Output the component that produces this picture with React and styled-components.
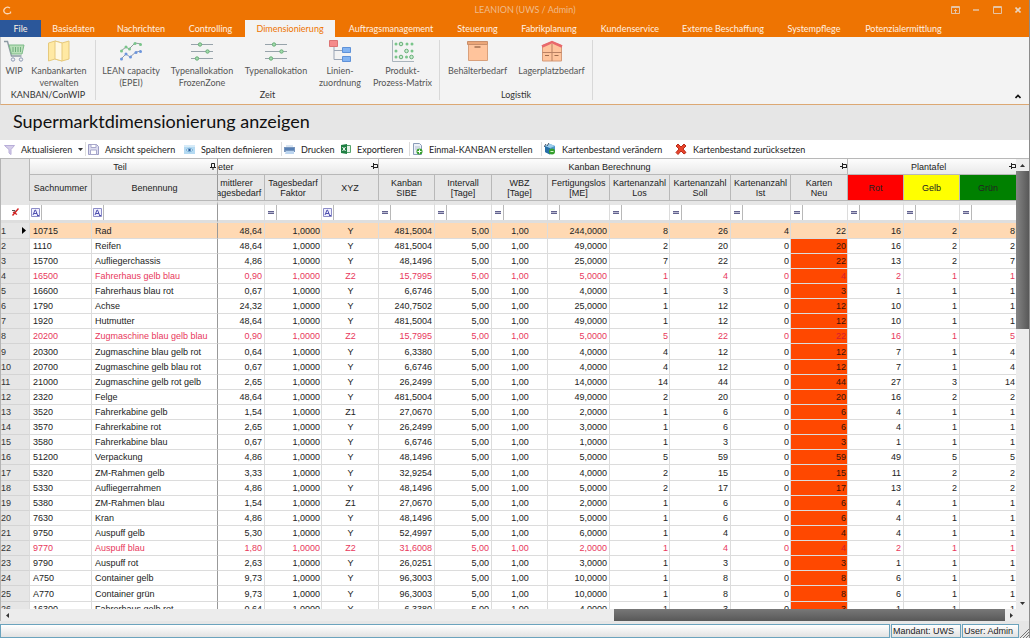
import React, { useState } from 'react';
import styled, { createGlobalStyle, css } from 'styled-components';

const GlobalStyle = createGlobalStyle`
	* {
		box-sizing: border-box;
	}

	body {
		margin: 0;
		font-family: Lato, "Open Sans", sans-serif;
		font-size: 9px;
		color: #222;
		overflow: hidden;
	}

	button, input {
		font: inherit;
		color: inherit;
		margin: 0;
		padding: 0;
		border: 0;
		background: none;
	}
`;

const Window = styled.div`
	display: flex;
	flex-direction: column;
	height: 100vh;
	background-color: #e6e6e6;
	border-right: 1px solid #8c8c8c;
`;

const TitleBar = styled.header`
	display: grid;
	grid-template-columns: 1fr auto 1fr;
	align-items: center;
	flex: none;
	height: 20px;
	padding: 0 5px 0 3px;
	background-color: #ee7402;
	color: #eebb8c;
`;

const AppName = styled.span`
	font-size: 9px;
	line-height: 12px;
	padding-left: 70px;
	margin-right: 47px;
`;

const WindowButtons = styled.div`
	display: flex;
	justify-content: flex-end;
	gap: 9px;
`;

const WindowButton = styled.button`
	display: flex;
	align-items: center;
	justify-content: center;
	width: 12px;
	height: 12px;
`;

const Tabs = styled.nav`
	display: flex;
	flex: none;
	height: 17px;
	background-color: #ee7402;
`;

const Tab = styled.button`
	flex: none;
	width: ${({ $width }) => $width}px;
	height: 17px;
	line-height: 16px;
	color: #fff1e2;
	white-space: nowrap;
	cursor: pointer;

	${({ $file }) => $file && css`
		background-color: #2b579a;
	`}

	${({ $active }) => $active && css`
		background-color: #f3f3f3;
		color: #ee7402;
	`}
`;

const Ribbon = styled.section`
	display: flex;
	flex: none;
	height: 68px;
	padding: 3px 0 4px;
	background-color: #f3f3f3;
	border-bottom: 1px solid #dca873;
	border-left: 1px solid #c6c6c6;
`;

const RibbonGroup = styled.div`
	display: flex;
	flex-direction: column;
	justify-content: space-between;
	padding: 0 2px;
	border-right: 1px solid #d8d8d8;
`;

const RibbonItems = styled.div`
	display: flex;
`;

const RibbonButton = styled.button`
	display: flex;
	flex-direction: column;
	align-items: center;
	width: ${({ $width }) => $width}px;
	line-height: 12px;
	color: #555;
	white-space: pre;
	cursor: pointer;

	svg {
		margin-bottom: 3px;
	}
`;

const GroupName = styled.span`
	line-height: 10px;
	text-align: center;
	color: #333;
`;

const CollapseButton = styled.button`
	align-self: flex-end;
	width: 12px;
	height: 10px;
	margin: 0 5px 0 auto;
`;

const Title = styled.h1`
	flex: none;
	height: 35px;
	margin: 0;
	padding-left: 13px;
	font-size: 18px;
	font-weight: normal;
	line-height: 33px;
	color: #111;
`;

const Toolbar = styled.div`
	display: flex;
	align-items: center;
	flex: none;
	height: 18px;
	padding-left: 2px;
	background-color: #fff;
`;

const ToolButton = styled.button`
	display: flex;
	align-items: center;
	flex: none;
	gap: 6px;
	width: ${({ $width }) => $width}px;
	height: 14px;
	padding-left: 2px;
	white-space: nowrap;
	cursor: pointer;
	border-right: 1px solid ${({ $divided }) => ($divided ? '#dcdcdc' : 'transparent')};

	svg {
		flex: none;
	}
`;

const GridPanel = styled.main`
	display: grid;
	grid-template-columns: 1fr 13px;
	grid-template-rows: 1fr 12px;
	flex: 1;
	min-height: 0;
	border-left: 1px solid #b4b4b4;
`;

const TableArea = styled.div`
	min-width: 0;
	min-height: 0;
	overflow: hidden;
	background-color: #fff;
`;

const Table = styled.table`
	width: 100%;
	table-layout: fixed;
	border-collapse: separate;
	border-spacing: 0;
	font-family: "Liberation Sans", Arial, sans-serif;
	font-size: 9px;
	line-height: 10px;
`;

const HeadCell = styled.th`
	height: ${({ $band }) => ($band ? 17 : 26)}px;
	padding: 0;
	overflow: hidden;
	font-weight: normal;
	white-space: pre;
	border-right: 1px solid ${({ $frozen }) => ($frozen ? '#999' : '#b8b8b8')};
	border-bottom: 1px solid #b8b8b8;
	background: ${({ $color, $band }) => $color || ($band ? 'linear-gradient(#fdfdfd, #e9e9e9)' : '#e6e6e6')};
	${({ $band }) => $band && 'border-top: 1px solid #b8b8b8;'}
`;

const BandLabel = styled.div`
	display: flex;
	align-items: center;

	span {
		flex: 1;
		text-align: ${({ $cut }) => ($cut ? 'left' : 'center')};
	}
`;

const CutLabel = styled.div`
	margin: 0 -1px 0 -10px;
`;

const Corner = styled.th`
	padding: 0;
	border-top: 1px solid #b8b8b8;
	border-right: 1px solid #b8b8b8;
	background-color: #e6e6e6;
`;

const FilterCell = styled.td`
	height: 22px;
	padding: 0;
	border-top: 4px solid #e6e6e6;
	border-bottom: 3px solid #dedede;
	border-right: 1px solid ${({ $frozen }) => ($frozen ? '#999' : '#dcdcdc')};
`;

const Filter = styled.div`
	display: flex;
	align-items: center;
	justify-content: center;
	height: 15px;

	input {
		flex: 1;
		width: 0;
		height: 15px;
		outline: 0;
	}
`;

const Operator = styled.button`
	display: flex;
	align-items: center;
	justify-content: center;
	flex: none;
	width: 12px;
	height: 15px;
	border-right: 1px solid #b8b8b8;
`;

const Row = styled.tr`
	height: 15px;
	color: ${({ $warning }) => ($warning ? '#e8385c' : '#222')};
	background-color: ${({ $selected }) => ($selected ? '#ffd9b3' : '#fff')};
	cursor: default;

	&:nth-child(8n + 1) {
		height: 16px;
	}
`;

const Cell = styled.td`
	padding: 0 ${({ $tight }) => ($tight ? 1 : 2)}px 0 3px;
	overflow: hidden;
	white-space: nowrap;
	text-align: ${({ $align }) => $align || 'right'};
	border-right: 1px solid ${({ $frozen }) => ($frozen ? '#999' : '#dcdcdc')};
	border-bottom: 1px solid #dcdcdc;

	${({ $changed, $warning }) => $changed && css`
		color: ${$warning ? '#d41c30' : '#3a1408'};
		background-color: #ff4800;
	`}
`;

const RowNumber = styled.th`
	padding: 0 3px 0 0;
	font-weight: normal;
	text-align: left;
	color: #333;
	border-right: 1px solid #dcdcdc;
	border-bottom: 1px solid #d4d4d4;
	background-color: #e6e6e6;

	div {
		display: flex;
		align-items: center;
		justify-content: space-between;
	}
`;

const VerticalBar = styled.div`
	display: flex;
	flex-direction: column;
	background-color: #ececec;
	border-top: 1px solid #b8b8b8;
`;

const HorizontalBar = styled.div`
	display: flex;
	grid-column: 1 / 3;
	padding-right: 12px;
	background-color: #ececec;
`;

const ArrowButton = styled.button`
	display: flex;
	align-items: center;
	justify-content: center;
	flex: none;
	width: 12px;
	height: 12px;
`;

const Track = styled.div`
	display: flex;
	flex: 1;
	flex-direction: ${({ $vertical }) => ($vertical ? 'column' : 'row')};
	justify-content: ${({ $vertical }) => ($vertical ? 'flex-start' : 'flex-end')};
`;

const Thumb = styled.div`
	${({ $vertical }) => ($vertical ? css`
		height: 37%;
		background: linear-gradient(to right, #858585, #585858);
	` : css`
		width: 391px;
		background: linear-gradient(#787878, #585858);
	`)}
`;

const StatusBar = styled.footer`
	display: flex;
	align-items: center;
	flex: none;
	gap: 1px;
	height: 17px;
	padding-top: 2px;
	background-color: #e6e6e6;
	font-family: "Liberation Sans", Arial, sans-serif;
`;

const StatusField = styled.div`
	flex: ${({ $fill }) => ($fill ? 1 : 'none')};
	height: 14px;
	width: ${({ $width }) => ($width ? `${$width}px` : 'auto')};
	padding-left: 1px;
	border: 1px solid #6ba3bd;
	line-height: 13px;
	font-size: 9px;
	white-space: nowrap;
	background: linear-gradient(#fff, #e2e2e2);
`;

const Grip = styled.svg`
	align-self: flex-end;
	flex: none;
`;

const icons = {
	cart: (
		<svg width="22" height="22" viewBox="0 0 22 22" fill="none">
			<path d="M1 1.500h3.500l4 14.500h10" stroke="#8d9aa3" strokeWidth="1.400" />
			<path d="M6 5h15l-2 9H8.500z" fill="#b9dfb9" stroke="#7dbb88" />
			<path d="M10 7v5M12.500 7v5M15 7v5M17.500 7v5" stroke="#6eae7c" />
			<circle cx="10" cy="19.500" r="1.700" stroke="#8d9ab5" />
			<circle cx="18" cy="19.500" r="1.700" stroke="#8d9ab5" />
		</svg>
	),
	map: (
		<svg width="22" height="22" viewBox="0 0 22 22">
			<path d="M.5 3 7 1l7 2 7-2v18l-7 2-7-2-6.500 2z" fill="#ffe9a3" stroke="#e6c97c" />
			<path d="M7 1l7 2v18l-7-2z" fill="#fff8e2" stroke="#e6c97c" />
		</svg>
	),
	capacity: (
		<svg width="22" height="22" viewBox="0 0 22 22" fill="none">
			<path d="M1 11l5-4 3 2 6-6 6 1" stroke="#8d9a9a" />
			<path d="M1 19l5-5 4 3 6-5 5-1" stroke="#8d9ab5" />
			<g fill="#79c58a"><circle cx="1.500" cy="11" r="1.500" /><circle cx="6" cy="7" r="1.500" /><circle cx="9.500" cy="9" r="1.500" /><circle cx="15" cy="3.500" r="1.500" /><circle cx="20.500" cy="4.500" r="1.500" /></g>
			<g fill="#6b95dc"><circle cx="1.500" cy="19" r="1.500" /><circle cx="6" cy="14" r="1.500" /><circle cx="10.500" cy="17" r="1.500" /><circle cx="16" cy="12.500" r="1.500" /><circle cx="20.500" cy="11.500" r="1.500" /></g>
		</svg>
	),
	sliders: (
		<svg width="22" height="22" viewBox="0 0 22 22" stroke="#97a3aa">
			<path d="M0 4.500h22M0 11.500h22M0 18.500h22" />
			<g fill="#a4dcae" stroke="#68ae77"><circle cx="9" cy="4.500" r="1.700" /><circle cx="16.500" cy="11.500" r="1.700" /><circle cx="6" cy="18.500" r="1.700" /></g>
		</svg>
	),
	tree: (
		<svg width="22" height="22" viewBox="0 0 22 22" fill="none">
			<path d="M5 7v12.500h8M5 10.500h8" stroke="#9aa5b5" />
			<path d="M.5.500h8v6h-8z" fill="#f58a8a" stroke="#dc7373" />
			<path d="M13.500 7.500h8v5h-8zM13.500 16.500h8v5h-8z" fill="#83b4f2" stroke="#5f92d8" />
		</svg>
	),
	matrix: (
		<svg width="22" height="22" viewBox="0 0 22 22" fill="#79c58a">
			<path d="M.5 0v21.500H22" stroke="#a9b4bc" fill="none" />
			<g><circle cx="4" cy="4" r="1.500" /><circle cx="15" cy="4" r="1.500" /><circle cx="20" cy="4" r="1.500" /><circle cx="4" cy="11" r="1.500" /><circle cx="20" cy="11" r="1.500" /><circle cx="4" cy="17" r="1.500" /><circle cx="14.500" cy="17" r="1.500" /></g>
			<g fill="#c9ecd0" stroke="#68ae77"><circle cx="9" cy="4" r="1.800" /><circle cx="14.500" cy="11" r="1.800" /><circle cx="9" cy="17" r="1.800" /><circle cx="19.500" cy="17" r="1.800" /></g>
		</svg>
	),
	box: (
		<svg width="22" height="22" viewBox="0 0 22 22">
			<path d="M1.500 4.500h19v16h-19z" fill="#ffc49c" stroke="#d9a07b" />
			<path d="M.5 1.500h20v3h-20z" fill="#eba678" stroke="#c98f6b" />
			<path d="M7.500 7h6" stroke="#8b5b3d" strokeWidth="1.200" />
		</svg>
	),
	warehouse: (
		<svg width="22" height="22" viewBox="0 0 22 22">
			<path d="M1.500 5.500 11 2l9.500 3.500v15.500h-19z" fill="#ffc49c" stroke="#d59a78" />
			<path d="M11 4v17M1.500 12.500h19" stroke="#b98163" />
			<path d="M4 15.500h4M13.500 15.500h4" stroke="#a06e50" />
			<path d="M1 6.500 11 2l10 4.500" fill="none" stroke="#e8696c" strokeWidth="2.500" />
		</svg>
	),
	funnel: (
		<svg width="11" height="11" viewBox="0 0 11 11">
			<path d="M.5 1.500h10L7 5.500v5l-2-1.500V5.500z" fill="#d5cdea" stroke="#b8aed8" />
		</svg>
	),
	save: (
		<svg width="11" height="11" viewBox="0 0 11 11">
			<path d="M.5.500h8l2 2v8H.500z" fill="#dcdcf0" stroke="#9d9dc5" />
			<path d="M3 .5h5v3H3zM2.500 6h6v4.500h-6z" fill="#fff" stroke="#a8a8cb" />
		</svg>
	),
	columns: (
		<svg width="11" height="11" viewBox="0 0 11 11">
			<path d="M0 1h11v9H0z" fill="#b5daf2" />
			<path d="M0 1h11v2H0z" fill="#d6ebf8" />
			<path d="M2 6q3.500-3.500 7 0-3.500 3.500-7 0" fill="#e8f6ff" stroke="#7cb3d8" />
			<circle cx="5.500" cy="6" r="1.300" fill="#245a9c" />
		</svg>
	),
	printer: (
		<svg width="11" height="11" viewBox="0 0 11 11">
			<path d="M2 1h7v3H2z" fill="#d9e5f2" />
			<path d="M0 3h11v5H0z" fill="#7896bd" />
			<path d="M1 4h9v2H1z" fill="#5780b5" />
			<path d="M2 7h8v3H1z" fill="#bcd5ef" />
		</svg>
	),
	excel: (
		<svg width="10" height="10" viewBox="0 0 10 10">
			<path d="M5 1.500h4.500v7H5z" fill="#e6f3e9" stroke="#57a56d" />
			<path d="M0 1l6-1v10L0 9z" fill="#1f7f43" />
			<path d="M1.500 3l3 4M4.500 3l-3 4" stroke="#fff" />
		</svg>
	),
	create: (
		<svg width="11" height="12" viewBox="0 0 11 12">
			<path d="M1.500.500h6l2 2v9h-8z" fill="#edf1f8" stroke="#8a9cb8" />
			<path d="M3 4h5M3 6h3" stroke="#b1bfd3" />
			<circle cx="7.500" cy="8.500" r="3" fill="#36a02c" />
			<path d="M5.500 8.500h4M7.500 6.500v4" stroke="#fff" />
		</svg>
	),
	change: (
		<svg width="12" height="12" viewBox="0 0 12 12">
			<path d="M1 3l5-2 5 2v6l-5 2.500L1 9z" fill="#4d96cc" />
			<path d="M1 3l5 2v6.500L1 9z" fill="#2870a8" />
			<path d="M1 3l5-2 5 2-5 2z" fill="#9dcdec" />
			<path d="M0 4l2-3M3 3l2-3" stroke="#3a4f66" />
			<circle cx="8" cy="8.500" r="3" fill="#36a02c" />
			<path d="M6.500 8.500h3" stroke="#d6f5cc" />
		</svg>
	),
	reset: (
		<svg width="12" height="12" viewBox="0 0 12 12">
			<path d="M3 1l3 3 3-3 2 2-3 3 3 3.500L9 11 6 8l-3 3.500-2-2L4 6 1 3z" fill="#e8452c" stroke="#b92c1a" />
		</svg>
	),
};

const Logo = () => (
	<svg width="9" height="9" viewBox="0 0 9 9" fill="none" stroke="#fbd7b5" strokeWidth="1.300">
		<path d="M7 2Q4 0 1.800 2.500T2 7q2.500 1.500 5.500 0V5.500" />
	</svg>
);

const Pin = ({ down }) => (
	<svg width="7" height="7" viewBox="0 0 7 7" fill="none" stroke="#222">
		{down
			? <path d="M1.500 4V.5h3V4M4.500.5v4M0 4.500h6M3 5v2" />
			: <path d="M3 1.500h3.500v3H3M3 4.500h4M2.500 0v6M0 3.500h2" />}
	</svg>
);

const Arrow = ({ dir }) => (
	<svg width="5" height="5" viewBox="0 0 5 5" fill="#333">
		{dir === 'up' && <path d="M0 4l2.500-3L5 4z" />}
		{dir === 'down' && <path d="M0 1l2.500 3L5 1z" />}
		{dir === 'left' && <path d="M4 0L1 2.500 4 5z" />}
		{dir === 'right' && <path d="M1 0l3 2.500L1 5z" />}
	</svg>
);

const RowMarker = () => (
	<svg width="4" height="7" viewBox="0 0 4 7" fill="#000">
		<path d="M0 0l4 3.500L0 7z" />
	</svg>
);

const TextOperator = () => (
	<svg width="9" height="9" viewBox="0 0 9 9" fill="none">
		<path d="M.5.500h8v8h-8z" fill="#f0f0ff" stroke="#8c8cc8" />
		<path d="M2 7l2-5h.5l2 5M3 5.500h3M6 7.500h2" stroke="#5050b0" />
	</svg>
);

const EqualOperator = () => (
	<svg width="6" height="4" viewBox="0 0 6 4">
		<path d="M0 .5h6M0 2.500h6" stroke="#62628e" />
		<path d="M0 1.500h6" stroke="#b9b9d0" />
	</svg>
);

const tabs = [
	{ name: 'File', width: 41 },
	{ name: 'Basisdaten', width: 65 },
	{ name: 'Nachrichten', width: 70 },
	{ name: 'Controlling', width: 69 },
	{ name: 'Dimensionierung', width: 90 },
	{ name: 'Auftragsmanagement', width: 112 },
	{ name: 'Steuerung', width: 61 },
	{ name: 'Fabrikplanung', width: 82 },
	{ name: 'Kundenservice', width: 80 },
	{ name: 'Externe Beschaffung', width: 106 },
	{ name: 'Systempflege', width: 76 },
	{ name: 'Potenzialermittlung', width: 103 },
];

const groups = [
	{
		name: 'KANBAN/ConWIP',
		items: [
			{ name: 'WIP', icon: 'cart', width: 22 },
			{ name: 'Kanbankarten\nverwalten', icon: 'map', width: 68 },
		],
	},
	{
		name: 'Zeit',
		items: [
			{ name: 'LEAN capacity\n(EPEI)', icon: 'capacity', width: 66 },
			{ name: 'Typenallokation\nFrozenZone', icon: 'sliders', width: 76 },
			{ name: 'Typenallokation', icon: 'sliders', width: 72 },
			{ name: 'Linien-\nzuordnung', icon: 'tree', width: 56 },
			{ name: 'Produkt-\nProzess-Matrix', icon: 'matrix', width: 69 },
		],
	},
	{
		name: 'Logistik',
		items: [
			{ name: 'Behälterbedarf', icon: 'box', width: 71 },
			{ name: 'Lagerplatzbedarf', icon: 'warehouse', width: 77 },
		],
	},
];

const tools = [
	{ name: 'Aktualisieren', icon: 'funnel', width: 84, divided: true, menu: true },
	{ name: 'Ansicht speichern', icon: 'save', width: 96 },
	{ name: 'Spalten definieren', icon: 'columns', width: 100, divided: true },
	{ name: 'Drucken', icon: 'printer', width: 57 },
	{ name: 'Exportieren', icon: 'excel', width: 71, divided: true },
	{ name: 'Einmal-KANBAN erstellen', icon: 'create', width: 132, divided: true },
	{ name: 'Kartenbestand verändern', icon: 'change', width: 131 },
	{ name: 'Kartenbestand zurücksetzen', icon: 'reset', width: 140 },
];

const columns = [
	{ key: 'number', name: 'Sachnummer', width: 62, align: 'left', filter: 'text' },
	{ key: 'title', name: 'Benennung', width: 126, align: 'left', filter: 'text', frozen: true },
	{ key: 'demand', name: 'mittlerer\nTagesbedarf', width: 47, cut: true },
	{ key: 'factor', name: 'Tagesbedarf\nFaktor', width: 57, filter: 'equal', tight: true },
	{ key: 'xyz', name: 'XYZ', width: 57, align: 'center', filter: 'text' },
	{ key: 'sibe', name: 'Kanban\nSIBE', width: 56, filter: 'equal' },
	{ key: 'interval', name: 'Intervall\n[Tage]', width: 57, filter: 'equal' },
	{ key: 'wbz', name: 'WBZ\n[Tage]', width: 56, align: 'center', filter: 'equal' },
	{ key: 'lot', name: 'Fertigungslos\n[ME]', width: 62, filter: 'equal' },
	{ key: 'cardsLot', name: 'Kartenanzahl\nLos', width: 60, filter: 'equal', tight: true },
	{ key: 'cardsTarget', name: 'Kartenanzahl\nSoll', width: 61, filter: 'equal' },
	{ key: 'cardsActual', name: 'Kartenanzahl\nIst', width: 60, filter: 'equal', tight: true },
	{ key: 'cardsNew', name: 'Karten\nNeu', width: 57, filter: 'equal', tight: true },
	{ key: 'red', name: 'Rot', width: 56, filter: 'equal', color: '#ff0000' },
	{ key: 'yellow', name: 'Gelb', width: 56, filter: 'equal', color: '#ffff00' },
	{ key: 'green', name: 'Grün', width: 57, filter: 'equal', color: '#008000', tight: true },
];

const bands = [
	{ name: 'Teil', span: 2, frozen: true },
	{ name: 'eter', span: 3, cut: true },
	{ name: 'Kanban Berechnung', span: 8 },
	{ name: 'Plantafel', span: 3 },
];

const parts = [
	['10715', 'Rad', '48,64', 'Y', '481,5004', '244,0000', 8, 26, 4, 22, 16, 2, 8],
	['1110', 'Reifen', '48,64', 'Y', '481,5004', '49,0000', 2, 20, 0, 20, 16, 2, 2],
	['15700', 'Aufliegerchassis', '4,86', 'Y', '48,1496', '25,0000', 7, 22, 0, 22, 13, 2, 7],
	['16500', 'Fahrerhaus gelb blau', '0,90', 'Z2', '15,7995', '5,0000', 1, 4, 0, 4, 2, 1, 1],
	['16600', 'Fahrerhaus blau rot', '0,67', 'Y', '6,6746', '4,0000', 1, 3, 0, 3, 1, 1, 1],
	['1790', 'Achse', '24,32', 'Y', '240,7502', '25,0000', 1, 12, 0, 12, 10, 1, 1],
	['1920', 'Hutmutter', '48,64', 'Y', '481,5004', '49,0000', 1, 12, 0, 12, 10, 1, 1],
	['20200', 'Zugmaschine blau gelb blau', '0,90', 'Z2', '15,7995', '5,0000', 5, 22, 0, 22, 16, 1, 5],
	['20300', 'Zugmaschine blau gelb rot', '0,64', 'Y', '6,3380', '4,0000', 4, 12, 0, 12, 7, 1, 4],
	['20700', 'Zugmaschine gelb blau rot', '0,67', 'Y', '6,6746', '4,0000', 4, 12, 0, 12, 7, 1, 4],
	['21000', 'Zugmaschine gelb rot gelb', '2,65', 'Y', '26,2499', '14,0000', 14, 44, 0, 44, 27, 3, 14],
	['2320', 'Felge', '48,64', 'Y', '481,5004', '49,0000', 2, 20, 0, 20, 16, 2, 2],
	['3520', 'Fahrerkabine gelb', '1,54', 'Z1', '27,0670', '2,0000', 1, 6, 0, 6, 4, 1, 1],
	['3570', 'Fahrerkabine rot', '2,65', 'Y', '26,2499', '3,0000', 1, 6, 0, 6, 4, 1, 1],
	['3580', 'Fahrerkabine blau', '0,67', 'Y', '6,6746', '1,0000', 1, 3, 0, 3, 1, 1, 1],
	['51200', 'Verpackung', '4,86', 'Y', '48,1496', '5,0000', 5, 59, 0, 59, 49, 5, 5],
	['5320', 'ZM-Rahmen gelb', '3,33', 'Y', '32,9254', '4,0000', 2, 15, 0, 15, 11, 2, 2],
	['5330', 'Aufliegerrahmen', '4,86', 'Y', '48,1496', '5,0000', 2, 17, 0, 17, 13, 2, 2],
	['5380', 'ZM-Rahmen blau', '1,54', 'Z1', '27,0670', '2,0000', 1, 6, 0, 6, 4, 1, 1],
	['7630', 'Kran', '4,86', 'Y', '48,1496', '5,0000', 1, 6, 0, 6, 4, 1, 1],
	['9750', 'Auspuff gelb', '5,30', 'Y', '52,4997', '6,0000', 1, 4, 0, 4, 4, 1, 1],
	['9770', 'Auspuff blau', '1,80', 'Z2', '31,6008', '2,0000', 1, 4, 0, 4, 2, 1, 1],
	['9790', 'Auspuff rot', '2,63', 'Y', '26,0251', '3,0000', 1, 3, 0, 3, 1, 1, 1],
	['A750', 'Container gelb', '9,73', 'Y', '96,3003', '10,0000', 1, 8, 0, 8, 6, 1, 1],
	['A770', 'Container grün', '9,73', 'Y', '96,3003', '10,0000', 1, 8, 0, 8, 6, 1, 1],
	['16300', 'Fahrerhaus gelb rot', '0,64', 'Y', '6,3380', '4,0000', 1, 3, 0, 3, 1, 1, 1],
].map(([number, title, demand, xyz, sibe, lot, cardsLot, cardsTarget, cardsActual, cardsNew, red, yellow, green]) => ({
	number, title, demand, factor: '1,0000', xyz, sibe, interval: '5,00', wbz: '1,00', lot,
	cardsLot, cardsTarget, cardsActual, cardsNew, red, yellow, green,
}));

const PartsTable = () => {
	const [selected, setSelected] = useState(0);

	return (
		<Table>
			<colgroup>
				<col width="29" />
				{columns.map(({ key, width }) => <col key={key} width={width} />)}
			</colgroup>
			<thead>
				<tr>
					<Corner rowSpan={2} />
					{bands.map(({ name, span, frozen, cut }) => (
						<HeadCell key={name} colSpan={span} $band $frozen={frozen}>
							<BandLabel $cut={cut}>
								<span>{name}</span>
								<Pin down={frozen} />
							</BandLabel>
						</HeadCell>
					))}
				</tr>
				<tr>
					{columns.map(({ key, name, color, frozen, cut }) => (
						<HeadCell key={key} $color={color} $frozen={frozen}>
							{cut ? <CutLabel>{name}</CutLabel> : name}
						</HeadCell>
					))}
				</tr>
				<tr>
					<FilterCell>
						<Filter>
							<button aria-label="Filter löschen">
								<svg width="8" height="8" viewBox="0 0 8 8" fill="none">
									<path d="M1 2.500h3l-.5 3L2 7" stroke="#555" />
									<path d="M7.500.5l-6 7M2 4l4 2.500" stroke="#d02020" strokeWidth="1.400" />
								</svg>
							</button>
						</Filter>
					</FilterCell>
					{columns.map(({ key, name, filter, frozen }) => (
						<FilterCell key={key} $frozen={frozen}>
							<Filter>
								{filter && (
									<Operator aria-label="Operator">
										{filter === 'text' ? <TextOperator /> : <EqualOperator />}
									</Operator>
								)}
								<input type="text" aria-label={name} />
							</Filter>
						</FilterCell>
					))}
				</tr>
			</thead>
			<tbody>
				{parts.map((part, index) => (
					<Row
						key={part.number}
						$selected={index === selected}
						$warning={part.xyz === 'Z2'}
						onClick={() => setSelected(index)}
					>
						<RowNumber>
							<div>
								{index + 1}
								{index === selected && <RowMarker />}
							</div>
						</RowNumber>
						{columns.map(({ key, align, frozen, tight }) => (
							<Cell
								key={key}
								$align={align}
								$frozen={frozen}
								$tight={tight}
								$warning={part.xyz === 'Z2'}
								$changed={key === 'cardsNew' && part.cardsActual === 0}
							>
								{part[key]}
							</Cell>
						))}
					</Row>
				))}
			</tbody>
		</Table>
	);
};

const App = () => {
	const [active, setActive] = useState('Dimensionierung');

	return (
		<>
			<GlobalStyle />
			<Window>
				<TitleBar>
					<Logo />
					<AppName>LEANION (UWS / Admin)</AppName>
					<WindowButtons>
						<WindowButton aria-label="Menüband">
							<svg width="9" height="8" viewBox="0 0 9 8" fill="none" stroke="#e6c3a3">
								<path d="M.5.500h8v7h-8zM0 1.500h9M4.500 3v4M3 4.500h3" />
							</svg>
						</WindowButton>
						<WindowButton aria-label="Minimieren">
							<svg width="6" height="2" viewBox="0 0 6 2"><path d="M0 1h6" stroke="#e6c3a3" strokeWidth="1.500" /></svg>
						</WindowButton>
						<WindowButton aria-label="Maximieren">
							<svg width="9" height="8" viewBox="0 0 9 8" fill="none" stroke="#e6c3a3">
								<path d="M.5.500h8v7h-8zM0 1.500h9" />
							</svg>
						</WindowButton>
						<WindowButton aria-label="Schließen">
							<svg width="6" height="6" viewBox="0 0 6 6"><path d="M.5.5l5 5M5.500.5l-5 5" stroke="#e9d3be" strokeWidth="1.600" /></svg>
						</WindowButton>
					</WindowButtons>
				</TitleBar>
				<Tabs>
					{tabs.map(({ name, width }) => (
						<Tab
							key={name}
							$width={width}
							$file={name === 'File'}
							$active={name === active}
							onClick={() => setActive(name)}
						>
							{name}
						</Tab>
					))}
				</Tabs>
				<Ribbon>
					{groups.map(({ name, items }) => (
						<RibbonGroup key={name}>
							<RibbonItems>
								{items.map(item => (
									<RibbonButton key={item.name} $width={item.width}>
										{icons[item.icon]}
										{item.name}
									</RibbonButton>
								))}
							</RibbonItems>
							<GroupName>{name}</GroupName>
						</RibbonGroup>
					))}
					<CollapseButton aria-label="Menüband minimieren">
						<svg width="6" height="5" viewBox="0 0 6 5" fill="none">
							<path d="M.5 4L3 1.500 5.500 4" stroke="#111" strokeWidth="1.600" />
						</svg>
					</CollapseButton>
				</Ribbon>
				<Title>Supermarktdimensionierung anzeigen</Title>
				<Toolbar>
					{tools.map(({ name, icon, width, divided, menu }) => (
						<ToolButton key={name} $width={width} $divided={divided}>
							{icons[icon]}
							{name}
							{menu && <Arrow dir="down" />}
						</ToolButton>
					))}
				</Toolbar>
				<GridPanel>
					<TableArea>
						<PartsTable />
					</TableArea>
					<VerticalBar>
						<ArrowButton aria-label="Nach oben"><Arrow dir="up" /></ArrowButton>
						<Track $vertical><Thumb $vertical /></Track>
						<ArrowButton aria-label="Nach unten"><Arrow dir="down" /></ArrowButton>
					</VerticalBar>
					<HorizontalBar>
						<ArrowButton aria-label="Nach links"><Arrow dir="left" /></ArrowButton>
						<Track><Thumb /></Track>
						<ArrowButton aria-label="Nach rechts"><Arrow dir="right" /></ArrowButton>
					</HorizontalBar>
				</GridPanel>
				<StatusBar>
					<StatusField $fill />
					<StatusField $width={70}>Mandant: UWS</StatusField>
					<StatusField $width={57}>User: Admin</StatusField>
					<Grip width="9" height="9" viewBox="0 0 9 9" stroke="#777">
						<path d="M9 0L0 9M9 3L3 9M9 6L6 9" />
					</Grip>
				</StatusBar>
			</Window>
		</>
	);
};

export default App;
